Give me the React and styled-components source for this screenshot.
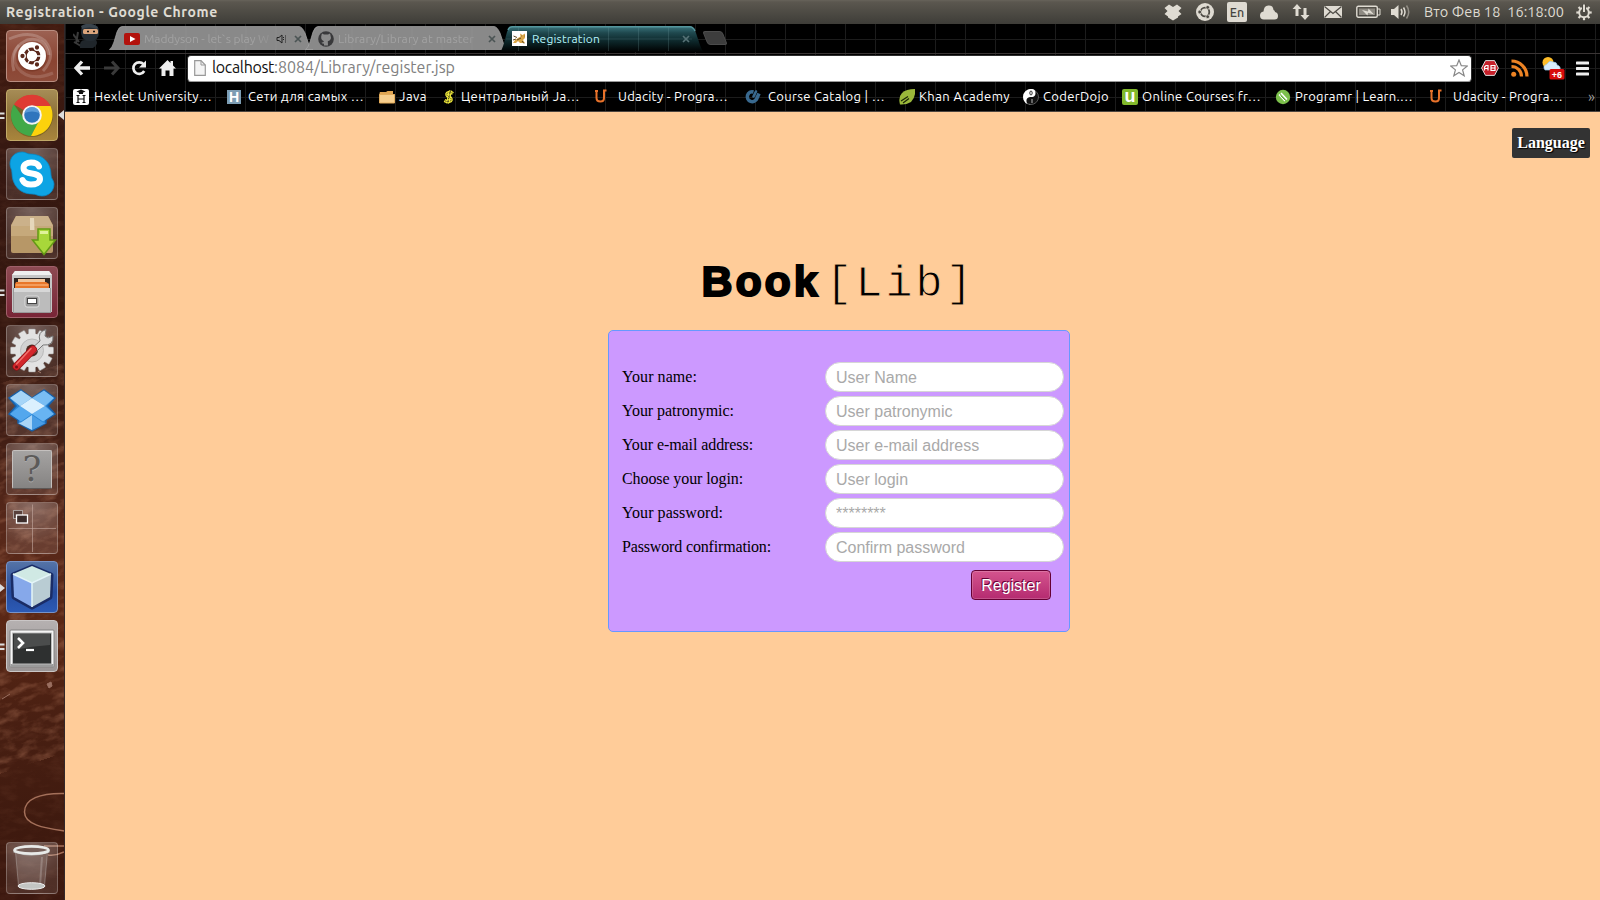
import React, { useLayoutEffect, useRef, useState } from "react";
import styled, { createGlobalStyle } from "styled-components";

const GlobalStyle = createGlobalStyle`
  *, *::before, *::after { box-sizing: border-box; }
  html, body { margin: 0; padding: 0; overflow: hidden; }
  svg { display: block; flex: none; }
`;

const UI_FONT = `Ubuntu, "Noto Sans", "Open Sans", sans-serif`;

/* ---------- text that tracks itself to a given width ---------- */

const Tracked = styled.span`
  display: inline-block;
  white-space: pre;
`;

function FitText({ width, children }) {
  const ref = useRef(null);
  const [spacing, setSpacing] = useState(0);
  useLayoutEffect(() => {
    const natural = ref.current.getBoundingClientRect().width;
    setSpacing((width - natural) / children.length);
  }, [width, children]);
  return (
    <Tracked ref={ref} style={{ letterSpacing: `${spacing}px` }}>
      {children}
    </Tracked>
  );
}

/* ---------- desktop ---------- */

const Desktop = styled.div`
  width: 1600px;
  height: 900px;
  display: flex;
  flex-direction: column;
  overflow: hidden;
  background: #000;
`;

const TopPanel = styled.header`
  height: 24px;
  flex: none;
  display: flex;
  justify-content: space-between;
  align-items: center;
  padding: 0 8px 0 6px;
  background: linear-gradient(#67635a 0, #5b574f 2px, #3e3d38 100%);
  color: #dfdbd2;
  font-family: ${UI_FONT};
`;

const WindowTitle = styled.div`
  font-size: 14px;
  line-height: 22px;
  font-weight: 700;
`;

const Indicators = styled.div`
  display: flex;
  align-items: center;
  height: 24px;
`;

const Indicator = styled.div`
  width: ${(p) => p.$width}px;
  display: flex;
  flex: none;
`;

const LayoutBadge = styled.div`
  width: 20px;
  height: 20px;
  border-radius: 2px;
  background: #dfdbd2;
  color: #45433e;
  font-size: 12.5px;
  font-weight: 500;
  line-height: 20px;
  text-align: center;
`;

const Clock = styled.div`
  width: 152px;
  font-size: 14.5px;
  line-height: 22px;
`;

const Workspace = styled.div`
  flex: 1;
  display: flex;
  min-height: 0;
`;

/* ---------- launcher ---------- */

const LauncherBar = styled.nav`
  position: relative;
  width: 65px;
  flex: none;
  display: flex;
  flex-direction: column;
  gap: 7px;
  padding: 6px 6px 6px;
  border-right: 1px solid #33282a;
  background: linear-gradient(#421b10 0, #361811 130px, #35170f 300px, #3f1d14 400px, #57281a 500px, #5a2715 600px, #481f12 700px, #3f1a0f 800px, #3c180f 100%);
`;

const Wallpaper = styled.svg`
  position: absolute;
  inset: 0;
`;

const Tile = styled.div`
  position: relative;
  width: 52px;
  height: 52px;
  flex: none;
  display: flex;
  align-items: center;
  justify-content: center;
  margin-top: ${(p) => (p.$last ? "auto" : 0)};
  border-radius: 4px;
  border: 1px solid ${(p) => p.$edge || "rgba(255,255,255,.25)"};
  background: ${(p) => p.$fill || "radial-gradient(circle at 50% 0, rgba(255,255,255,.32), rgba(255,255,255,.1) 75%)"};
`;

const RunningMark = styled.svg`
  position: absolute;
  left: -7px;
  top: 19px;
`;

const FocusMark = styled.svg`
  position: absolute;
  right: -7px;
  top: 20px;
`;

/* ---------- browser ---------- */

const Browser = styled.main`
  flex: 1;
  display: flex;
  flex-direction: column;
  min-width: 0;
`;

const BrowserChrome = styled.div`
  height: 88px;
  flex: none;
  display: flex;
  flex-direction: column;
  border-bottom: 1px solid #4c4540;
  background-color: #000;
  background-image:
    linear-gradient(90deg, #1c1c1c 1px, transparent 1px),
    linear-gradient(#1c1c1c 1px, transparent 1px);
  background-size: 30px 29px;
  background-position: 30px 15px;
  font-family: ${UI_FONT};
`;

const TabStrip = styled.div`
  height: 29px;
  display: flex;
  align-items: flex-start;
  padding-left: 8px;
`;

const Mascot = styled.div`
  width: 36px;
`;

const Tab = styled.div`
  position: relative;
  width: ${(p) => p.$width}px;
  height: 26px;
  margin-top: 2px;
  margin-right: ${(p) => (p.$active ? 0 : -9)}px;
  z-index: ${(p) => (p.$active ? 2 : 1)};
  display: flex;
  align-items: center;
  padding: 0 ${(p) => p.$end}px 1px ${(p) => p.$inset}px;
  font-size: 12px;
  color: ${(p) => (p.$active ? "#b4f4fa" : "#a2a2a2")};
`;

const TabShape = styled.svg`
  position: absolute;
  inset: 0;
`;

const TabIcon = styled.div`
  position: relative;
  width: ${(p) => p.$width}px;
  flex: none;
`;

const TabTitle = styled.div`
  position: relative;
  flex: 1;
  overflow: hidden;
  white-space: nowrap;
  line-height: 18px;
  -webkit-mask-image: ${(p) => (p.$fade ? "linear-gradient(90deg,#000 82%,rgba(0,0,0,.1) 100%)" : "none")};
`;

const TabActions = styled.div`
  position: relative;
  display: flex;
  align-items: center;
  gap: 7px;
`;

const NewTab = styled.div`
  width: 20px;
  height: 14px;
  margin: 7px 0 0 1px;
  border-radius: 3px;
  transform: skewX(22deg);
  background: #3d3d3d;
  border: 1px solid #4c4c4c;
`;

const Toolbar = styled.div`
  height: 29px;
  display: flex;
  align-items: center;
  padding: 0 10px 0 9px;
  border-top: 1px solid #3a3535;
`;

const ToolButton = styled.div`
  width: ${(p) => p.$width}px;
  display: flex;
  flex: none;
`;

const AddressBar = styled.div`
  width: 1285px;
  height: 27px;
  flex: none;
  display: flex;
  align-items: center;
  padding: 0 3px 0 6px;
  margin-right: 9px;
  border-radius: 4px;
  background: #fff;
  border: 1px solid #2c2c2c;
  border-bottom-color: #999;
  color: #808080;
  font-size: 16px;
`;

const Url = styled.div`
  flex: 1;
  padding: 0 0 2px 6px;
  line-height: 23px;
`;

const Host = styled.span`
  color: #111;
`;

const BookmarkBar = styled.div`
  height: 29px;
  display: flex;
  align-items: center;
  padding-left: 8px;
  color: #fff;
  font-size: 13px;
  line-height: 20px;
`;

const BookmarkItem = styled.div`
  width: ${(p) => p.$width}px;
  flex: none;
  display: flex;
  align-items: center;
  gap: ${(p) => p.$gap}px;
  white-space: nowrap;
`;

const BookmarkLabel = styled.div`
  padding-bottom: 2px;
`;

const Overflow = styled.div`
  color: #999;
  font-size: 15px;
  line-height: 16px;
`;

/* ---------- page ---------- */

const Page = styled.section`
  flex: 1;
  display: flex;
  flex-direction: column;
  align-items: center;
  padding: 16px 10px 0 0;
  background: #ffcc99;
  font-family: "Liberation Serif", "Times New Roman", serif;
  font-size: 16px;
  color: #000;
`;

const LanguageButton = styled.div`
  align-self: flex-end;
  width: 78px;
  height: 30px;
  border-radius: 2px;
  background: #333;
  color: #fff;
  font-weight: 700;
  line-height: 30px;
  text-align: center;
  text-shadow: 1px 1px 1px #000;
`;

const Logo = styled.h1`
  display: flex;
  align-items: baseline;
  gap: 5px;
  height: 60px;
  margin: 93px 0 0 22px;
  line-height: 60px;
  font-weight: 400;
`;

const LogoBook = styled.span`
  font-family: "Liberation Sans", Arial, sans-serif;
  font-size: 43px;
  font-weight: 700;
  -webkit-text-stroke: 2px #000;
`;

const LogoLib = styled.span`
  font-family: "Courier New", "Liberation Mono", monospace;
  font-size: 45px;
  -webkit-text-stroke: 0.9px #ffcc99;
`;

const RegisterForm = styled.form`
  width: 462px;
  height: 302px;
  margin: 19px 0 0 23px;
  display: flex;
  flex-direction: column;
  gap: 4px;
  padding: 31px 5px 0 13px;
  border: 1px solid #6699ff;
  border-radius: 5px;
  background: #cc99ff;
`;

const FieldRow = styled.label`
  height: 30px;
  display: flex;
  align-items: center;
  justify-content: space-between;
`;

const FieldInput = styled.input`
  width: 239px;
  height: 30px;
  padding: 1px 10px 0;
  border: 1px solid #d6d6d6;
  border-radius: 15px;
  outline: 0;
  background: #fff;
  font: 16px "Liberation Sans", Arial, sans-serif;
  &::placeholder { color: #a9a9a9; opacity: 1; }
`;

const SubmitButton = styled.button`
  align-self: flex-end;
  width: 80px;
  height: 30px;
  margin: 4px 13px 0 0;
  padding: 2px 0 0;
  border: 1px solid #660033;
  border-radius: 4px;
  background: linear-gradient(#d4548e, #b52b70);
  box-shadow: inset 0 0 0 1px rgba(255, 255, 255, 0.18);
  color: #fff;
  font: 16px "Liberation Sans", Arial, sans-serif;
  text-shadow: -1px -1px 0 #660033;
`;

/* ---------- launcher icons ---------- */

const UbuntuIcon = () => (
  <svg width="50" height="50" viewBox="0 0 50 50">
    <g fill="none" stroke="#fff" strokeWidth="3">
      <path d="M2 8Q24-2 38 10Q50 25 36 40" opacity=".2" />
      <path d="M7 40Q1 18 20 9Q38 5 42 24" opacity=".22" />
      <path d="M46 42Q22 52 10 36Q4 24 12 14" opacity=".14" />
    </g>
    <circle cx="25" cy="26" r="14.5" fill="#6b2d1d" opacity=".5" />
    <circle cx="25" cy="25" r="14" fill="#fff" />
    <circle cx="25" cy="25" r="6.8" fill="none" stroke="#5b281b" strokeWidth="3.2" />
    <g stroke="#fff" strokeWidth="1.3">
      <path d="M25 25L36 25M25 25L19.500 34.500M25 25L19.500 15.500" />
      <circle cx="15.500" cy="25" r="2.800" fill="#5b281b" />
      <circle cx="30" cy="16.500" r="2.800" fill="#5b281b" />
      <circle cx="30" cy="33.500" r="2.800" fill="#5b281b" />
    </g>
    <circle cx="25" cy="25" r="4.800" fill="#fff" />
  </svg>
);

const ChromeIcon = () => (
  <svg width="44" height="44" viewBox="0 0 44 44">
    <circle cx="22" cy="23" r="21" fill="#5a4a10" opacity=".5" />
    <path d="M22 22L4 11.500A21 21 0 0 1 40.200 12.500L40.500 13.500L22 13.500Z" fill="#df3a33" />
    <path d="M3.800 11.500A21 21 0 0 0 21 43L30 27L15 27Z" fill="#41a948" />
    <path d="M21 43A21 21 0 0 0 40.500 13L22 13L30 26Z" fill="#fcd20c" />
    <circle cx="22" cy="22" r="9.800" fill="#f4f4f4" />
    <circle cx="22" cy="22" r="7.800" fill="#2f75bd" />
    <path d="M14.500 20A7.800 7.800 0 0 1 29.500 20Q22 17 14.500 20" fill="#5b9ad6" />
  </svg>
);

const SkypeIcon = () => (
  <svg width="46" height="46" viewBox="0 0 46 46">
    <path d="M13 1C17 1 18 3 21 3C34 3 42 12 42 24C42 28 45 29 45 33C45 40 40 45 33 45C29 45 27 43 23 43C10 43 3 33 3 22C3 18 1 17 1 13C1 6 6 1 13 1Z" fill="#0da4e4" stroke="#0787c4" strokeWidth=".8" />
    <path d="M30 15.500C28.500 12 25 11.500 22 11.500C18 11.500 14.500 13.500 14.500 17C14.500 25 31 20 31 28C31 31.500 27 33.500 22 33.500C18 33.500 15 32.500 13.500 29" fill="none" stroke="#fff" strokeWidth="6" strokeLinecap="round" />
  </svg>
);

const BoxIcon = () => (
  <svg width="50" height="50" viewBox="0 0 50 50">
    <path d="M9 8H41L46 17V43Q46 45 44 45H6Q4 45 4 43V17Z" fill="#b79767" />
    <path d="M9 8H41L46 18H4Z" fill="#cbb18a" />
    <path d="M4 18H46V28H4Z" fill="#c6a97b" />
    <path d="M23 10H27L27.500 22H23Z" fill="#e6d7bb" />
    <path d="M31 21H43V32H48.500L37 46.500L25.500 32H31Z" fill="#a8d73a" stroke="#639915" strokeWidth="1.500" />
    <path d="M33 23H41V26H33Z" fill="#dff29a" />
  </svg>
);

const FilesIcon = () => (
  <svg width="50" height="50" viewBox="0 0 50 50">
    <path d="M8 4H42L45 8V45H5V8Z" fill="#c6c6c6" />
    <path d="M8 4H42L45 8H5Z" fill="#efefef" />
    <rect x="7" y="11" width="36" height="13" fill="#2c2320" />
    <rect x="11" y="12" width="27" height="4" fill="#f0c39a" />
    <path d="M9 15H39L42 17V23H8V17Z" fill="#e8762a" />
    <path d="M9 18H41" stroke="#ffc18c" />
    <path d="M6 21H44V46H6Z" fill="#999" />
    <path d="M7 21H43V45H7Z" fill="#bcbcbc" />
    <path d="M7 21H43V25H7Z" fill="#d7d7d7" />
    <rect x="18" y="29" width="14" height="11" rx="2" fill="#9a9a9a" stroke="#ddd" />
    <rect x="20.500" y="31.500" width="9" height="5" fill="#fff" stroke="#444" />
  </svg>
);

const SettingsIcon = () => (
  <svg width="50" height="50" viewBox="0 0 50 50">
    <g fill="#e2e2e2" stroke="#999" strokeWidth=".5">
      {[0, 30, 60, 90, 120, 150].map((a) => (
        <rect key={a} x="21.500" y="3" width="7" height="43" rx="1" transform={`rotate(${a} 25 24.500)`} />
      ))}
    </g>
    <circle cx="25" cy="24.500" r="17" fill="#e2e2e2" />
    <circle cx="25" cy="24.500" r="11.500" fill="#d2d2d2" stroke="#bbb" />
    <circle cx="25" cy="24.500" r="6" fill="#4b2a20" />
    <path d="M23 24L33 15Q30 6 39 3.500L38 10L41 12L46 10Q47 20 36 19L27 28Z" fill="#dcdcdc" stroke="#777" />
    <path d="M9.500 40.500L26 23.500" stroke="#8f1116" strokeWidth="8" strokeLinecap="round" />
    <path d="M9.500 40.500L26 23.500" stroke="#d3262b" strokeWidth="6.500" strokeLinecap="round" />
    <path d="M9.500 38L24 22.500" stroke="#f0726e" strokeWidth="1.500" strokeLinecap="round" />
    <circle cx="9.500" cy="41" r="1.500" fill="#751015" />
  </svg>
);

const DropboxIcon = () => (
  <svg width="50" height="50" viewBox="0 0 50 50">
    <path d="M14 5L25 13L37 5L48 13L41 21L48 29L39 35V38L25 46L11 38V35L2 29L9 21L2 13Z" fill="#2b86d6" stroke="#1860a8" strokeWidth="1.500" />
    <path d="M14 5.500L25 13L13 21L3 13Z" fill="#a6d5f8" />
    <path d="M37 5.500L47 13L38 21L25 13Z" fill="#79bdf3" />
    <path d="M13 21L25 29L14 36.500L3 29Z" fill="#53a7ed" />
    <path d="M38 21L47 29L36 36.500L25 29Z" fill="#68b4f2" />
    <path d="M25 13L38 21L25 29L13 21Z" fill="#dbf0fe" />
    <path d="M14 37.500L25 30V45L11 38Z" fill="#a9d5f7" />
    <path d="M36 37.500L25 30V45L39 38Z" fill="#4a9de5" />
  </svg>
);

const Unknown = styled.div`
  width: 40px;
  height: 39px;
  margin-top: 1px;
  border: 1px solid #c4c0be;
  border-bottom-color: #5d5856;
  border-radius: 2px;
  background: linear-gradient(#a5a3a2, #858382);
  color: #5c5a59;
  font: 35px/37px "DejaVu Serif", serif;
  text-align: center;
  text-shadow: 0 1px 0 #aaa;
`;

const WorkspaceIcon = () => (
  <svg width="50" height="50" viewBox="0 0 50 50">
    <path d="M1.500 25.500H49M25.500 1.500V49" stroke="#c4aaa2" strokeOpacity=".6" />
    <rect x="6.500" y="7.500" width="9" height="8" fill="#59413c" stroke="#aaa09c" />
    <rect x="9.500" y="12" width="11" height="8" fill="#3c2d2b" stroke="#fff" strokeWidth="1.300" />
  </svg>
);

const CubeIcon = () => (
  <svg width="50" height="50" viewBox="0 0 50 50">
    <path d="M25 5L44 13L43 35L25 45L7 35L6 13Z" fill="#1a2c66" stroke="#1a2c66" strokeWidth="5" strokeLinejoin="round" />
    <path d="M25 4L44 12L25 21L6 12Z" fill="#d0e9e4" />
    <path d="M6 12L25 21V45L7 35Z" fill="#86a8ea" />
    <path d="M44 12L25 21V45L43 35Z" fill="#b9ccd3" />
    <path d="M6 12L25 21L44 12M25 21V45" fill="none" stroke="#e4f5f8" strokeWidth="1.500" />
  </svg>
);

const TerminalIcon = () => (
  <svg width="50" height="50" viewBox="0 0 50 50">
    <rect x="3" y="9" width="44" height="37" rx="1" fill="#f5f5f5" stroke="#858383" />
    <rect x="3.500" y="43" width="43" height="3" fill="#9a9a9a" />
    <rect x="5.500" y="12" width="39" height="31" fill="#2e3030" stroke="#bbb" />
    <path d="M7 13H43V24Q25 25 7 29Z" fill="#4b4d4d" />
    <path d="M11 17L16 22L11 27" fill="none" stroke="#fff" strokeWidth="2.600" />
    <path d="M19 29H27" stroke="#fff" strokeWidth="2.200" />
  </svg>
);

const TrashIcon = () => (
  <svg width="50" height="50" viewBox="0 0 50 50">
    <path d="M8.500 9L11.500 43Q25 49 37.500 43L40.500 9Z" fill="#fff" fillOpacity=".14" stroke="#ddd" strokeOpacity=".3" />
    <path d="M35 14L33 43" stroke="#fff" strokeOpacity=".2" strokeWidth="2" />
    <ellipse cx="24.500" cy="43" rx="13.500" ry="3.300" fill="#c3c5c3" stroke="#eee" />
    <path d="M6.500 7V9.500Q24.500 15.500 42.500 9.500V7Z" fill="#b9bcba" />
    <ellipse cx="24.500" cy="7" rx="17" ry="3.600" fill="#76605a" stroke="#e8eae8" strokeWidth="2.600" />
  </svg>
);

const TWO_BARS = (
  <RunningMark width="6" height="14" viewBox="0 0 6 14">
    <path d="M0 4.500H4.500M0 9H4.500" stroke="#ddd" strokeWidth="2.200" />
  </RunningMark>
);
const ONE_ARROW = (
  <RunningMark width="6" height="14" viewBox="0 0 6 14">
    <path d="M0 3L5 7L0 11Z" fill="#ddd" />
  </RunningMark>
);

const LAUNCHER = [
  { icon: <UbuntuIcon />, fill: "linear-gradient(#9c6152,#8a4432 60%,#8e4c3a)", edge: "#b98d80" },
  { icon: <ChromeIcon />, fill: "linear-gradient(#a68c56,#8d7037 50%,#a9853c)", edge: "#c2aa68", mark: TWO_BARS, focus: true },
  { icon: <SkypeIcon /> },
  { icon: <BoxIcon /> },
  { icon: <FilesIcon />, fill: "linear-gradient(#8d4a52,#782536)", edge: "#a0606a", mark: TWO_BARS },
  { icon: <SettingsIcon /> },
  { icon: <DropboxIcon /> },
  { icon: <Unknown>?</Unknown> },
  { icon: <WorkspaceIcon /> },
  { icon: <CubeIcon />, fill: "linear-gradient(#5573a6,#254b9d 60%,#2c5ab5)", edge: "#7793c8", mark: ONE_ARROW },
  { icon: <TerminalIcon />, fill: "linear-gradient(#b5b0b0,#9a9595)", edge: "#cac6c6", mark: TWO_BARS },
  { icon: <TrashIcon />, last: true },
];

function Launcher() {
  return (
    <LauncherBar>
      <Wallpaper width="64" height="876" viewBox="0 0 64 876">
        <filter id="rock" x="0" y="0" width="100%" height="100%">
          <feTurbulence type="fractalNoise" baseFrequency=".06 .13" numOctaves="5" seed="8" />
          <feColorMatrix values="0 0 0 0 .5  0 0 0 0 .21  0 0 0 0 .12  1.8 0 0 0 -.8" />
        </filter>
        <rect y="0" width="64" height="360" filter="url(#rock)" opacity=".15" />
        <g transform="rotate(-18 32 560)">
          <rect x="-100" y="360" width="260" height="370" filter="url(#rock)" opacity=".5" />
        </g>
        <rect y="700" width="64" height="176" filter="url(#rock)" opacity=".12" />
        <path d="M64 769.500C40 769 24.500 775 24.500 788C24.500 801 45 804 64 807M64 822H44M64 828Q56 832 48 831" fill="none" stroke="#a4705a" strokeWidth="1.500" />
        <path d="M47 660l4-2 1 4-3 2zM2 675l8-5M38 347l3 2" fill="#9a6f60" stroke="#9a6f60" />
      </Wallpaper>
      {LAUNCHER.map((t, i) => (
        <Tile key={i} $fill={t.fill} $edge={t.edge} $last={t.last}>
          {t.mark}
          {t.icon}
          {t.focus && (
            <FocusMark width="6" height="10" viewBox="0 0 6 10">
              <path d="M6 0V10L0 5Z" fill="#ddd" />
            </FocusMark>
          )}
        </Tile>
      ))}
    </LauncherBar>
  );
}

/* ---------- panel icons ---------- */

const P = "#dfdbd2";

function PanelIndicators() {
  return (
    <Indicators>
      <Indicator $width={32}>
        <svg width="18" height="17" viewBox="0 0 18 17">
          <path d="M5 .5L9 3L13 .5L17.500 4L14.500 7L17.500 10L14 12.500V13.500L9 16.500L4 13.500V12.500L.5 10L3.500 7L.5 4Z" fill={P} />
        </svg>
      </Indicator>
      <Indicator $width={31}>
        <svg width="18" height="18" viewBox="0 0 18 18">
          <circle cx="9" cy="9" r="9" fill={P} />
          <circle cx="9" cy="9" r="4.300" fill="none" stroke="#4d4a44" strokeWidth="1.800" />
          <g fill="#4d4a44" stroke={P} strokeWidth=".8">
            <circle cx="3.700" cy="9" r="1.900" /><circle cx="11.700" cy="4.300" r="1.900" /><circle cx="11.700" cy="13.700" r="1.900" />
          </g>
        </svg>
      </Indicator>
      <Indicator $width={33}><LayoutBadge>En</LayoutBadge></Indicator>
      <Indicator $width={32}>
        <svg width="18" height="15" viewBox="0 0 18 15">
          <path d="M4 14.500Q0 14.500 0 10.500Q0 7 3.500 6.500Q4 0 9 .5Q13 .5 13.500 5Q15 5.500 15 7Q18 7.500 18 11Q18 14.500 14.500 14.500Z" fill={P} />
        </svg>
      </Indicator>
      <Indicator $width={32}>
        <svg width="18" height="18" viewBox="0 0 18 18">
          <path d="M5 1L9.500 6H6.500V13H3.500V6H.5ZM13 17L8.500 12H11.500V5H14.500V12H17.500Z" fill={P} />
        </svg>
      </Indicator>
      <Indicator $width={32}>
        <svg width="18" height="14" viewBox="0 0 18 14">
          <rect y="1" width="18" height="12" fill={P} />
          <path d="M.5 1.500L9 8.500L17.500 1.500M.5 12.500L6.500 6.500M17.500 12.500L11.500 6.500" fill="none" stroke="#4d4a44" strokeWidth="1.200" />
        </svg>
      </Indicator>
      <Indicator $width={35}>
        <svg width="25" height="14" viewBox="0 0 25 14">
          <rect x=".8" y="1.300" width="20.500" height="11" rx="1.500" fill="none" stroke={P} strokeWidth="1.400" />
          <rect x="3" y="3.500" width="16" height="6.500" fill="#8e8a82" />
          <path d="M22 4H24V10H22" fill="none" stroke={P} />
          <path d="M6 5L12 6.500L12.500 3.500L18 9.500L12 7.800L11.500 10.500Z" fill={P} />
        </svg>
      </Indicator>
      <Indicator $width={33}>
        <svg width="20" height="16" viewBox="0 0 20 16">
          <path d="M0 5H3L7.500 1V15L3 11H0Z" fill={P} />
          <path d="M10 5Q12 8 10 11M12.500 3.500Q15.500 8 12.500 12.500" fill="none" stroke={P} strokeWidth="1.500" />
          <path d="M15.500 1.500Q20 8 15.500 14.500" fill="none" stroke="#928e86" strokeWidth="1.500" />
        </svg>
      </Indicator>
      <Clock><FitText width={140}>{"Вто Фев 18  16:18:00"}</FitText></Clock>
      <svg width="16" height="17" viewBox="0 0 16 17">
        <g stroke={P} strokeWidth="2.200">
          {[45, 90, 135, 180, 225, 270, 315].map((a) => (
            <path key={a} d="M8 4V.8" transform={`rotate(${a} 8 8.500)`} />
          ))}
        </g>
        <circle cx="8" cy="8.500" r="4.800" fill="none" stroke={P} strokeWidth="1.900" />
        <path d="M8 0V8" stroke="#4d4a44" strokeWidth="4" />
        <path d="M8 .5V8" stroke={P} strokeWidth="2" />
      </svg>
    </Indicators>
  );
}

/* ---------- bookmark icons ---------- */

const FavLetter = styled.div`
  width: ${(p) => p.$size || 16}px;
  height: ${(p) => p.$size || 16}px;
  flex: none;
  margin: 0 ${(p) => (16 - (p.$size || 16)) / 2}px;
  border-radius: ${(p) => p.$radius || 0}px;
  background: ${(p) => p.$bg || "none"};
  color: ${(p) => p.$color};
  font: ${(p) => p.$font};
  line-height: ${(p) => p.$line || 16}px;
  text-align: center;
`;

const HexletIcon = () => (
  <svg width="16" height="16" viewBox="0 0 16 16">
    <rect width="16" height="16" rx="2" fill="#fff" />
    <path d="M8 .5L12.500 2.500L8 4.500L3.500 2.500ZM6 3.500H10V5H6Z" fill="#111" />
    <path d="M5 6.500V13.500M11 6.500V13.500M5 10H11M3.500 13.500H6.500M9.500 13.500H12.500M3.500 6.500H6.500M9.500 6.500H12.500" stroke="#111" strokeWidth="1.200" />
  </svg>
);
const FolderIcon = () => (
  <svg width="16" height="16" viewBox="0 0 16 16">
    <path d="M1 3H7L8.500 2H14V5H15.500V14H.5V4Z" fill="#e0a653" />
    <path d="M.5 5.500H15.500V14H.5Z" fill="#f7cf8e" stroke="#e2ab5b" />
  </svg>
);
const DollarIcon = () => (
  <svg width="16" height="16" viewBox="0 0 16 16">
    <path d="M12 4.500Q9 2.500 6.500 4Q4.500 6 8 8Q11.500 10 9.500 12Q7 13.500 3.500 11.500M9.500 1.500L6.500 14.500" fill="none" stroke="#f1ea3b" strokeWidth="3.200" />
    <path d="M12 4.500Q9 2.500 6.500 4Q4.500 6 8 8Q11.500 10 9.500 12Q7 13.500 3.500 11.500M9.500 1.500L6.500 14.500" fill="none" stroke="#3c3b16" strokeWidth="1" strokeDasharray="1.500 1" />
  </svg>
);
const CourseIcon = () => (
  <svg width="16" height="16" viewBox="0 0 16 16">
    <path d="M8.500 3A4.900 4.900 0 1 0 11.800 9.500L14 4.500" fill="none" stroke="#39698f" strokeWidth="3.600" />
    <path d="M8.500 7.500L11 2.500" stroke="#39698f" strokeWidth="2.600" strokeLinecap="round" />
  </svg>
);
const LeafIcon = () => (
  <svg width="16" height="16" viewBox="0 0 16 16">
    <path d="M16 0Q17 8 12 13Q7 16 1 15.500Q-1 8 3 4Q7 0 16 0Z" fill="#9bb83b" />
    <path d="M2 12L9 7.500M4 14L10 9.500" stroke="#1c2608" strokeWidth="1.200" />
  </svg>
);
const YinIcon = () => (
  <svg width="16" height="16" viewBox="0 0 16 16">
    <circle cx="8" cy="8" r="7.500" fill="#111" stroke="#555" />
    <path d="M8 0A8 8 0 0 0 8 16A4 4 0 0 1 7 8A4 4 0 0 0 8 0Z" fill="#fff" />
    <circle cx="8.500" cy="4" r="4" fill="#fff" />
    <ellipse cx="8" cy="4" rx="1.200" ry="2" fill="none" stroke="#333" />
    <path d="M9 10V14" stroke="#bbb" />
  </svg>
);
const ProgramrIcon = () => (
  <svg width="16" height="16" viewBox="0 0 16 16">
    <circle cx="8" cy="8" r="7.200" fill="#7cc04c" />
    <path d="M4 5.500L10 12M6 4L12 10.500" stroke="#fff" strokeWidth="1.500" />
    <path d="M5.500 6.500L10.500 11.500" stroke="#5ea83a" />
  </svg>
);
const UdacityIcon = () => (
  <svg width="16" height="16" viewBox="0 0 16 16">
    <path d="M2 2H5M3.500 2V9Q3.500 12.500 7.500 12.500Q11 12.500 11 9V1.500H13.500" fill="none" stroke="#e8722a" strokeWidth="2" />
  </svg>
);

const BOOKMARKS = [
  { icon: <HexletIcon />, text: "Hexlet University…", tw: 118, w: 153, gap: 5 },
  { icon: <FavLetter $bg="#7d9db3" $color="#fff" $size={14} $line={14} $font='700 14px "Liberation Sans", sans-serif'>H</FavLetter>, text: "Сети для самых …", tw: 116, w: 153, gap: 6 },
  { icon: <FolderIcon />, text: "Java", tw: 28, w: 62, gap: 4 },
  { icon: <DollarIcon />, text: "Центральный Ja…", tw: 119, w: 152, gap: 4 },
  { icon: <UdacityIcon />, text: "Udacity - Progra…", tw: 110, w: 152, gap: 9 },
  { icon: <CourseIcon />, text: "Course Catalog | …", tw: 117, w: 154, gap: 7 },
  { icon: <LeafIcon />, text: "Khan Academy", tw: 91, w: 124, gap: 4 },
  { icon: <YinIcon />, text: "CoderDojo", tw: 66, w: 99, gap: 4 },
  { icon: <FavLetter $bg="#82b92c" $radius={2} $color="#fff" $line={14} $font='700 18px "Liberation Sans", sans-serif'>u</FavLetter>, text: "Online Courses fr…", tw: 119, w: 153, gap: 4 },
  { icon: <ProgramrIcon />, text: "Programr | Learn.…", tw: 118, w: 153, gap: 4 },
  { icon: <UdacityIcon />, text: "Udacity - Progra…", tw: 110, w: 160, gap: 9 },
];

/* ---------- tab strip ---------- */

const CloseIcon = ({ color }) => (
  <svg width="8" height="8" viewBox="0 0 8 8">
    <path d="M1 1L7 7M7 1L1 7" stroke={color} strokeWidth="1.700" />
  </svg>
);

function InactiveShape({ width }) {
  return (
    <TabShape width={width} height="24" viewBox={`0 0 ${width} 24`}>
      <path d={`M.5 23.500Q3 22 5 16L8 6Q10 .5 13 .5H${width - 15}Q${width - 12} .5 ${width - 9} 7L${width - 5} 19Q${width - 3} 23.500 ${width - 1} 23.500Z`} fill="#898989" stroke="#a6a6a6" strokeOpacity=".7" />
      <path d={`M17 1V24M47 1V24M77 1V24M107 1V24M137 1V24M167 1V24`} stroke="#999" strokeOpacity=".35" />
    </TabShape>
  );
}

function ActiveShape({ width }) {
  return (
    <TabShape width={width} height="26" viewBox={`0 0 ${width} 26`}>
      <defs>
        <linearGradient id="active" x2="0" y2="1">
          <stop offset="0" stopColor="#3a747c" />
          <stop offset=".25" stopColor="#1f484e" />
          <stop offset=".6" stopColor="#0c2528" />
          <stop offset="1" stopColor="#000" />
        </linearGradient>
      </defs>
      <path d={`M0 26Q2 24 4 17L7 6Q9 .5 12 .5H${width - 14}Q${width - 11} .5 ${width - 8} 7L${width - 4} 19Q${width - 2} 25 ${width} 26Z`} fill="url(#active)" />
      <path d={`M8 4Q9 .8 12 .8H${width - 14}Q${width - 11} .8 ${width - 9} 5`} fill="none" stroke="#55969d" strokeWidth="1.500" />
      <path d="M18.500 1V25M48.500 1V25M78.500 1V25M108.500 1V25M138.500 1V25M168.500 1V25M6 13H192" stroke="#6a9499" strokeOpacity=".25" />
    </TabShape>
  );
}

function Tabs() {
  return (
    <TabStrip>
      <Mascot>
        <svg width="28" height="25" viewBox="0 0 28 25">
          <path d="M0 10L6 18M1 18L8 22M3 20L5 8" stroke="#3a3a3a" strokeWidth="2" />
          <path d="M7 24Q6 16 12 16L23 16Q26 20 20 24Z" fill="#20262b" />
          <path d="M8 9Q7 0 17 0Q26 0 26 8Q26 17 17 17Q9 17 8 9Z" fill="#252d34" />
          <path d="M8 2Q16-3 25 3L24 5Q16 2 9 5Z" fill="#3a444c" />
          <rect x="10" y="5" width="15" height="5" rx="1.500" fill="#dba57c" />
          <path d="M14 7.500H16M20 7.500H22" stroke="#111" strokeWidth="1.500" />
        </svg>
      </Mascot>
      <Tab $width={205} $inset={15} $end={12}>
        <InactiveShape width={205} />
        <TabIcon $width={20}>
          <svg width="16" height="12" viewBox="0 0 16 12">
            <rect width="16" height="12" rx="2" fill="#b3120c" />
            <path d="M6 3L11.500 6L6 9Z" fill="#fff" />
          </svg>
        </TabIcon>
        <TabTitle $fade><FitText width={125}>Maddyson - let`s play W</FitText></TabTitle>
        <TabActions>
          <svg width="11" height="10" viewBox="0 0 11 10">
            <path d="M1 3.500H3L6 1V9L3 6.500H1Z" fill="#8a8a8a" stroke="#222" />
            <path d="M7.500 3V7M9.500 1.500V8.500" stroke="#222" strokeDasharray="1 1" />
          </svg>
          <CloseIcon color="#4b5454" />
        </TabActions>
      </Tab>
      <Tab $width={204} $inset={13} $end={13}>
        <InactiveShape width={204} />
        <TabIcon $width={20}>
          <svg width="16" height="16" viewBox="0 0 16 16">
            <circle cx="8" cy="8" r="7.800" fill="#39393b" />
            <path d="M3.500 4L4 2.500L6 3.500H10L12 2.500L12.500 4.500Q14 9 9.800 10.200L10 14.500H6V12.500Q4 13 3.500 11.500Q5 12 6 10.200Q2 9 3.500 4Z" fill="#8b8b8b" />
          </svg>
        </TabIcon>
        <TabTitle $fade><FitText width={136}>Library/Library at master</FitText></TabTitle>
        <TabActions><CloseIcon color="#4b5454" /></TabActions>
      </Tab>
      <Tab $active $width={204} $inset={12} $end={14}>
        <ActiveShape width={204} />
        <TabIcon $width={20}>
          <svg width="15" height="15" viewBox="0 0 15 15">
            <rect width="15" height="15" fill="#fff" />
            <path d="M1 12Q2 9 6 7L8.500 5.500L8 2.500L10.500 4L13 2.500L13 7L11 9L13 12H8L6 10L4 12Z" fill="#d9a648" />
            <path d="M1.500 5L5 6.500M1 9L4 8M10 10L12 12.500M5 9L9 7M9 5H9.500M12 5H12.500" stroke="#5b4824" />
          </svg>
        </TabIcon>
        <TabTitle><FitText width={68}>Registration</FitText></TabTitle>
        <TabActions><CloseIcon color="#567276" /></TabActions>
      </Tab>
      <NewTab />
    </TabStrip>
  );
}

function NavBar() {
  return (
    <Toolbar>
      <ToolButton $width={29}>
        <svg width="17" height="16" viewBox="0 0 17 16"><path d="M8 1.500L2 8L8 14.500M2.500 8H16" fill="none" stroke="#eee" strokeWidth="3.300" /></svg>
      </ToolButton>
      <ToolButton $width={28}>
        <svg width="17" height="16" viewBox="0 0 17 16"><path d="M9 1.500L15 8L9 14.500M14.500 8H1" fill="none" stroke="#3a3a3a" strokeWidth="3" /></svg>
      </ToolButton>
      <ToolButton $width={28}>
        <svg width="16" height="16" viewBox="0 0 16 16">
          <path d="M12.500 4.200A5.800 5.800 0 1 0 13.200 11" fill="none" stroke="#eee" strokeWidth="2.700" />
          <path d="M15 .5V7.500H8Z" fill="#eee" />
        </svg>
      </ToolButton>
      <ToolButton $width={28}>
        <svg width="17" height="16" viewBox="0 0 17 16"><path d="M8.500 0L11.500 3V1H14V5.500L17 8.500H14.500V16H10.500V10.500H6.500V16H2.500V8.500H0Z" fill="#eee" /></svg>
      </ToolButton>
      <AddressBar>
        <svg width="12" height="16" viewBox="0 0 12 16">
          <path d="M.7 .7H7L11.300 5V15.300H.7Z" fill="#f4f4f4" stroke="#999" strokeWidth="1.200" />
          <path d="M7 .7V5H11.300" fill="none" stroke="#999" />
        </svg>
        <Url>
          <Host><FitText width={62}>localhost</FitText></Host>
          <FitText width={181}>:8084/Library/register.jsp</FitText>
        </Url>
        <svg width="18" height="18" viewBox="0 0 18 18">
          <path d="M9 1L11.300 6.700L17.300 7L12.600 10.900L14.200 16.800L9 13.500L3.800 16.800L5.400 10.900L.7 7L6.700 6.700Z" fill="#fff" stroke="#888" strokeWidth="1.200" />
        </svg>
      </AddressBar>
      <ToolButton $width={30}>
        <svg width="18" height="16" viewBox="0 0 18 16">
          <path d="M4.500 .6H13.500L17.400 8L13.500 15.400H4.500L.6 8Z" fill="#c7202a" stroke="#ddd" />
          <path d="M3.500 10.500V7L5 5.500H7V10.500M3.500 8.500H7M10 5.500V10.500H14V5.500ZM10 8H14" fill="none" stroke="#fff" strokeWidth="1.200" />
        </svg>
      </ToolButton>
      <ToolButton $width={30}>
        <svg width="18" height="18" viewBox="0 0 18 18">
          <circle cx="2.700" cy="15.300" r="2.500" fill="#ed8324" />
          <path d="M.5 7.500A10 10 0 0 1 10.500 17.500M.5 2A15.500 15.500 0 0 1 16 17.500" fill="none" stroke="#ed8324" strokeWidth="3.200" />
        </svg>
      </ToolButton>
      <ToolButton $width={35}>
        <svg width="24" height="24" viewBox="0 0 24 24">
          <circle cx="7" cy="6.500" r="5.500" fill="#ffbd28" />
          <path d="M4 14Q1 10 6 8Q8 4 12 6Q16 6 16 9Q20 10 19 14Z" fill="#d8ecfa" stroke="#9cc9e8" strokeWidth=".7" />
          <rect x="8.500" y="13" width="15" height="10.500" rx="1.500" fill="#d80c0c" />
          <text x="16" y="21.500" fontFamily="Liberation Sans, sans-serif" fontSize="9" fontWeight="700" fill="#fff" textAnchor="middle">+6</text>
        </svg>
      </ToolButton>
      <svg width="13" height="15" viewBox="0 0 13 15">
        <path d="M1 2H12M1 7.500H12M1 13H12" stroke="#eee" strokeWidth="3.200" strokeLinecap="round" />
      </svg>
    </Toolbar>
  );
}

const FIELDS = [
  ["Your name:", "User Name", 75],
  ["Your patronymic:", "User patronymic", 112],
  ["Your e-mail address:", "User e-mail address", 131],
  ["Choose your login:", "User login", 121],
  ["Your password:", "********", 101],
  ["Password confirmation:", "Confirm password", 149],
];

export default function App() {
  return (
    <Desktop>
      <GlobalStyle />
      <TopPanel>
        <WindowTitle><FitText width={212}>Registration - Google Chrome</FitText></WindowTitle>
        <PanelIndicators />
      </TopPanel>
      <Workspace>
        <Launcher />
        <Browser>
          <BrowserChrome>
            <Tabs />
            <NavBar />
            <BookmarkBar>
              {BOOKMARKS.map((b, i) => (
                <BookmarkItem key={i} $width={b.w} $gap={b.gap}>
                  {b.icon}
                  <BookmarkLabel><FitText width={b.tw}>{b.text}</FitText></BookmarkLabel>
                </BookmarkItem>
              ))}
              <Overflow>»</Overflow>
            </BookmarkBar>
          </BrowserChrome>
          <Page>
            <LanguageButton>Language</LanguageButton>
            <Logo>
              <LogoBook><FitText width={119}>Book</FitText></LogoBook>
              <LogoLib><FitText width={150}>[Lib]</FitText></LogoLib>
            </Logo>
            <RegisterForm>
              {FIELDS.map(([label, hint, width]) => (
                <FieldRow key={label}>
                  <FitText width={width}>{label}</FitText>
                  <FieldInput placeholder={hint} />
                </FieldRow>
              ))}
              <SubmitButton type="button">Register</SubmitButton>
            </RegisterForm>
          </Page>
        </Browser>
      </Workspace>
    </Desktop>
  );
}
